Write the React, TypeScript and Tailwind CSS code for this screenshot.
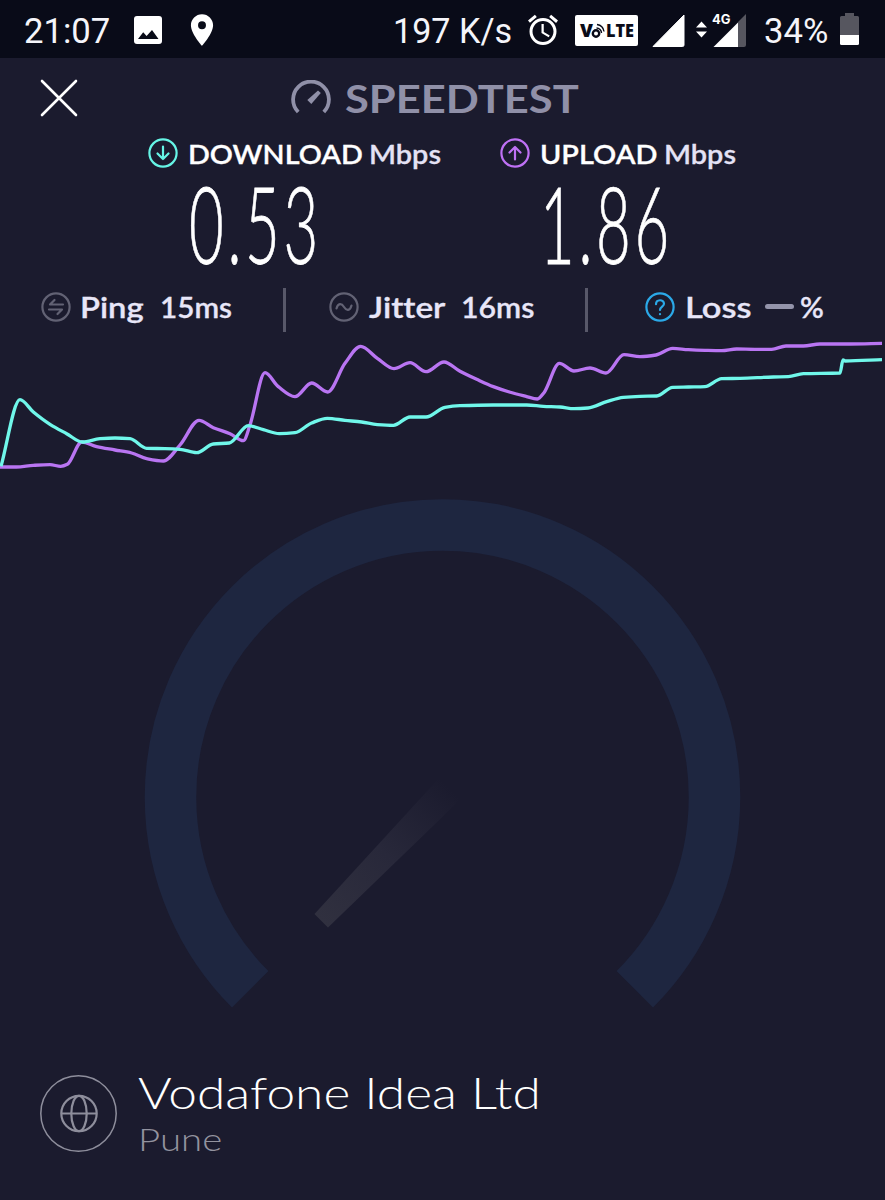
import type { ReactNode } from "react";
import { MdAlarm, MdPlace } from "react-icons/md";

type Point = [number, number];

const uploadPoints: Point[] = [
  [0, 411], [49, 411], [100, 406], [150, 404], [182, 409], [202, 403], [245, 336], [290, 350], [345, 360],
  [395, 369], [440, 386], [490, 393], [540, 345], [597, 271], [640, 293], [690, 311], [730, 332], [750, 285],
  [795, 128], [835, 170], [885, 200], [935, 159], [983, 186], [1035, 100], [1082, 49], [1132, 85], [1182, 116],
  [1230, 98], [1278, 125], [1332, 96], [1380, 124], [1430, 148], [1480, 170], [1528, 186], [1578, 199],
  [1612, 207], [1632, 188], [1678, 100], [1722, 123], [1770, 114], [1818, 129], [1872, 74], [1920, 80],
  [1968, 75], [2018, 55], [2065, 59], [2115, 61], [2165, 62], [2210, 57], [2265, 58], [2315, 58], [2358, 48],
  [2410, 48], [2460, 42], [2550, 42], [2646, 40],
];

const downloadPoints: Point[] = [
  [3, 409], [60, 209], [100, 246], [150, 283], [200, 311], [247, 336], [300, 326], [345, 324], [390, 326],
  [440, 355], [495, 356], [540, 358], [590, 368], [640, 342], [688, 339], [745, 287], [790, 299], [838, 311],
  [885, 308], [935, 279], [982, 265], [1035, 271], [1085, 276], [1132, 284], [1180, 286], [1230, 261],
  [1278, 261], [1335, 232], [1380, 227], [1480, 225], [1580, 225], [1630, 229], [1680, 231], [1722, 236],
  [1764, 234], [1820, 215], [1870, 202], [1920, 199], [1970, 198], [2018, 172], [2065, 171], [2115, 170],
  [2165, 146], [2220, 145], [2320, 141], [2365, 140], [2410, 131], [2520, 129], [2529, 90], [2536, 93],
  [2646, 89],
];

// Monotone cubic interpolation, so peaks stay on their samples
function smoothPath(points: Point[]) {
  const slopes = points.slice(1).map((p, i) => (p[1] - points[i][1]) / (p[0] - points[i][0]));
  const tangents = points.map((_, i) => {
    if (i === 0) return slopes[0];
    if (i === points.length - 1) return slopes[i - 1];
    const a = slopes[i - 1];
    const b = slopes[i];
    return a * b <= 0 ? 0 : (2 * a * b) / (a + b);
  });
  return points.slice(1).reduce((d, [x, y], i) => {
    const [px, py] = points[i];
    const h = (x - px) / 3;
    return `${d} C${px + h} ${py + h * tangents[i]} ${x - h} ${y - h * tangents[i + 1]} ${x} ${y}`;
  }, `M${points[0][0]} ${points[0][1]}`);
}

// Fixed-width slot holding horizontally stretched text
function Stretch({ slot, className, children }: { slot: string; className: string; children: ReactNode }) {
  return (
    <span className={`block shrink-0 ${slot}`}>
      <span className={`block w-max origin-left whitespace-pre ${className}`}>{children}</span>
    </span>
  );
}

function CircleIcon({ className, children }: { className: string; children: ReactNode }) {
  return (
    <svg
      viewBox="0 0 30 30"
      fill="none"
      stroke="currentColor"
      strokeWidth="2.2"
      strokeLinecap="round"
      strokeLinejoin="round"
      className={`size-[30px] shrink-0 ${className}`}
    >
      <circle cx="15" cy="15" r="13.6" />
      {children}
    </svg>
  );
}

function StatusBar() {
  return (
    <div className="flex h-[58px] items-center bg-[#090b18] pt-[3px] font-[Roboto,sans-serif] text-[35px] leading-none text-[#f5f5fa]">
      <Stretch slot="ml-[24px] w-[110px] pt-px" className="scale-x-[0.99]">21:07</Stretch>
      <svg viewBox="0 0 28 28" className="-mt-[1px] size-[28px] shrink-0">
        <rect width="28" height="28" rx="3" fill="#fff" />
        <path d="M4 23 9.2 16.2 12.6 20 18 14 24.5 23Z" fill="#090b18" />
      </svg>
      <MdPlace className="-mt-[2px] ml-[21px] size-[38px] shrink-0 text-white" />
      <Stretch slot="ml-[172px] w-[129px] pt-px" className="scale-x-[0.975]">197 K/s</Stretch>
      <MdAlarm className="-mt-[1px] ml-[3px] size-[36px] shrink-0 text-white" />
      <svg viewBox="0 0 63 31" className="ml-[14px] h-[31px] w-[63px] shrink-0">
        <rect width="63" height="31" rx="2" fill="#fff" />
        <g fill="#090b18" fontFamily="Open Sans, sans-serif" fontWeight="800">
          <text x="5" y="22" fontSize="18" textLength="13" lengthAdjust="spacingAndGlyphs">V</text>
          <text x="31" y="22" fontSize="18" textLength="28" lengthAdjust="spacingAndGlyphs">LTE</text>
        </g>
        <g fill="none" stroke="#090b18">
          <circle cx="21" cy="18.5" r="3.2" strokeWidth="2.4" />
          <path d="M21.5 13a5 5 0 0 1 5 5M22 9.5a8.3 8.3 0 0 1 7 7" strokeWidth="1.4" />
        </g>
      </svg>
      <svg viewBox="0 0 33 33" className="ml-[14px] size-[33px] shrink-0">
        <path d="M32 1V31Q32 32.5 30.5 32.5H1Z" fill="#fff" stroke="#fff" strokeLinejoin="round" />
      </svg>
      <svg viewBox="0 0 52 33" className="ml-[10px] h-[33px] w-[52px] shrink-0 overflow-visible">
        <path d="M1 13.5 6.5 7.5 12 13.5ZM1 17.5 6.5 23.5 12 17.5Z" fill="#fff" />
        <path d="M51 0V31Q51 33 49 33H43V8Z" fill="#56565f" />
        <path d="M43 8.5V33H18.5Z" fill="#fff" />
        <text x="17" y="10" fontSize="13" fontWeight="700" fill="#fff" fontFamily="Inter, sans-serif" textLength="18.5" lengthAdjust="spacingAndGlyphs">4G</text>
      </svg>
      <Stretch slot="ml-[17px] w-[76px] pt-px" className="scale-x-[0.99]">34%</Stretch>
      <svg viewBox="0 0 19 32" className="-mt-[3px] h-[32px] w-[19px] shrink-0">
        <path d="M5 0H14V3H17.5Q19 3 19 4.5V22H0V4.5Q0 3 1.5 3H5Z" fill="#56565f" />
        <path d="M0 22H19V30.5Q19 32 17.5 32H1.5Q0 32 0 30.5Z" fill="#fff" />
      </svg>
    </div>
  );
}

function Header() {
  return (
    <div className="flex h-20 items-center pl-[40px]">
      <svg viewBox="0 0 38 38" className="size-[38px]" stroke="#fff" strokeWidth="2.6" strokeLinecap="round">
        <path d="M2 2 36 36M36 2 2 36" />
      </svg>
      <svg viewBox="0 0 40 34" fill="none" className="-mt-[2px] ml-[213px] h-[34px] w-[40px]">
        <path d="M7.2 32A17.9 17.9 0 1 1 32.8 32" stroke="#9090a8" strokeWidth="3.8" />
        <path d="M16.3 20 27 10.5 29.8 13 20.3 24Z" fill="#9090a8" />
      </svg>
      <Stretch slot="ml-[14px] w-[240px]" className="scale-x-[1.115] font-[Lato,sans-serif] text-[39px] font-bold leading-none text-[#9090a8]">
        SPEEDTEST
      </Stretch>
    </div>
  );
}

function Results() {
  return (
    <div className="flex h-[150px] font-[Lato,sans-serif]">
      <div className="ml-[148px] w-[352px]">
        <div className="flex h-[30px] items-center text-[26px] font-semibold leading-none text-white">
          <CircleIcon className="-mt-px text-[#66f5e6]">
            <path d="M15 8.5V21M9.5 15.5 15 21 20.5 15.5" />
          </CircleIcon>
          <Stretch slot="ml-[10px] w-[181px] pt-[2px]" className="scale-x-[1.105] [-webkit-text-stroke:0.3px_currentColor]">DOWNLOAD</Stretch>
          <Stretch slot="w-[75px] pt-[2px]" className="scale-x-[1.11] text-[#e4e2f5] [-webkit-text-stroke:0.3px_currentColor]">Mbps</Stretch>
        </div>
        <Stretch slot="ml-[41px] mt-[12px]" className="scale-x-[0.56] text-[107px] font-light leading-[86px] tracking-[6.5px] text-white [-webkit-text-stroke:0.8px_white]">
          0.53
        </Stretch>
      </div>
      <div>
        <div className="flex h-[30px] items-center text-[26px] font-semibold leading-none text-white">
          <CircleIcon className="-mt-px text-[#bf71f5]">
            <path d="M15 21.5V9M9.5 14.5 15 9 20.5 14.5" />
          </CircleIcon>
          <Stretch slot="ml-[10px] w-[124px] pt-[2px]" className="scale-x-[1.11] [-webkit-text-stroke:0.3px_currentColor]">UPLOAD</Stretch>
          <Stretch slot="w-[75px] pt-[2px]" className="scale-x-[1.11] text-[#e4e2f5] [-webkit-text-stroke:0.3px_currentColor]">Mbps</Stretch>
        </div>
        <Stretch slot="ml-[40px] mt-[12px]" className="scale-x-[0.56] text-[107px] font-light leading-[86px] tracking-[6.5px] text-white [-webkit-text-stroke:0.8px_white]">
          1.86
        </Stretch>
      </div>
    </div>
  );
}

function Stats() {
  return (
    <div className="flex h-[44px] items-start font-[Lato,sans-serif] text-[28px] font-semibold leading-none text-[#e8e6f8] [-webkit-text-stroke:0.3px_currentColor] [font-variant-ligatures:none]">
      <div className="flex h-[37px] w-[283px] items-center pl-[41px]">
        <CircleIcon className="text-[#626274]">
          <path d="M22 12.5H9L13.5 8M8 17.5H21L16.5 22" />
        </CircleIcon>
        <Stretch slot="ml-[9px] w-[80px]" className="scale-x-[1.17]">Ping</Stretch>
        <Stretch slot="w-[75px]" className="scale-x-[1.06]">15ms</Stretch>
      </div>
      <div className="h-[44px] w-[3px] bg-[#585869]" />
      <div className="flex h-[37px] w-[299px] items-center pl-[43px]">
        <CircleIcon className="text-[#626274]">
          <path d="M7.5 16.5C9 11 12.5 11 15 15S21 19 22.5 13.5" />
        </CircleIcon>
        <Stretch slot="ml-[10px] w-[92px]" className="scale-x-[1.19]">Jitter</Stretch>
        <Stretch slot="w-[75px]" className="scale-x-[1.08]">16ms</Stretch>
      </div>
      <div className="h-[44px] w-[3px] bg-[#585869]" />
      <div className="flex h-[37px] items-center pl-[57px]">
        <CircleIcon className="text-[#2ba9e8]">
          <path d="M11 12.2C11 7 19 7 19 11.7C19 14.5 15 14.7 15 18M15 22V22.2" />
        </CircleIcon>
        <Stretch slot="ml-[10px] w-[80px]" className="scale-x-[1.23]">Loss</Stretch>
        <div className="h-[5px] w-[29px] rounded-full bg-[#9494aa]" />
        <Stretch slot="ml-[6px]" className="scale-x-[1.05]">%</Stretch>
      </div>
    </div>
  );
}

function Chart() {
  return (
    <svg viewBox="0 0 2655 450" fill="none" strokeWidth="10" strokeLinejoin="round" className="-mt-[2px] block h-[150px] w-[885px]">
      <path d={smoothPath(uploadPoints)} stroke="#b975f2" />
      <path d={smoothPath(downloadPoints)} stroke="#70f7ea" />
    </svg>
  );
}

function Gauge() {
  return (
    <svg viewBox="0 0 600 512" fill="none" className="ml-[142px] mt-[18px] block h-[512px] w-[600px]">
      <defs>
        <linearGradient id="needle" gradientUnits="userSpaceOnUse" x1="180" y1="422" x2="310" y2="292">
          <stop stopColor="#30303f" />
          <stop offset="0.5" stopColor="#28283a" />
          <stop offset="1" stopColor="#1b1b2e" />
        </linearGradient>
      </defs>
      <path d="M108.2 491.3A272 272 0 1 1 492.8 491.3" stroke="#1e2640" strokeWidth="51.5" />
      <path d="M172.5 416 186 429.5 320 300 299 278Z" fill="url(#needle)" />
    </svg>
  );
}

function Provider() {
  return (
    <div className="flex h-[100px] pl-[40px] font-[Lato,sans-serif]">
      <svg viewBox="0 0 77 77" fill="none" stroke="#8e8e9c" className="mt-[12px] size-[77px] shrink-0">
        <circle cx="38.5" cy="38.5" r="37.7" strokeWidth="1.5" />
        <g strokeWidth="2.2">
          <circle cx="39" cy="38.5" r="17.7" />
          <ellipse cx="39" cy="38.5" rx="7.7" ry="17.7" />
          <path d="M21.3 38.5H56.7" />
        </g>
      </svg>
      <div className="ml-[21px] mt-[5px]">
        <Stretch slot="h-[51px]" className="scale-x-[1.17] text-[44px] font-light leading-[48px] text-white">Vodafone Idea Ltd</Stretch>
        <Stretch slot="h-[40px]" className="scale-x-[1.2] text-[32px] font-light leading-[40px] text-[#93939f]">Pune</Stretch>
      </div>
    </div>
  );
}

export default function App() {
  return (
    <div className="h-[1200px] w-[885px] overflow-hidden bg-[#1b1b2e]">
      <StatusBar />
      <Header />
      <Results />
      <Stats />
      <Chart />
      <Gauge />
      <div className="h-[53px]" />
      <Provider />
    </div>
  );
}
